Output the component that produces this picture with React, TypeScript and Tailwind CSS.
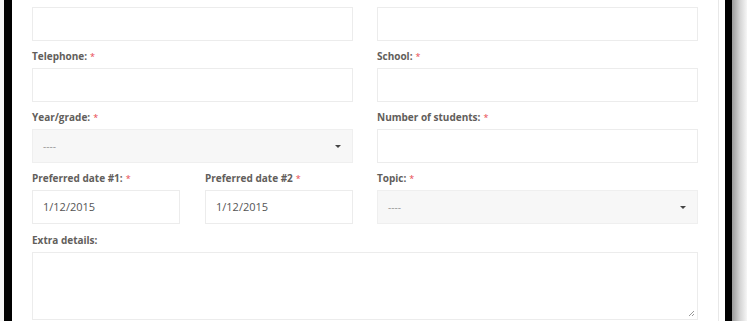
const font = { fontFamily: '"Open Sans", "Noto Sans", sans-serif' };

function Label({ text, req = true }: { text: string; req?: boolean }) {
  return (
    <div className="h-[13px] mb-[5px] mt-[1px] text-[10px] leading-[13px] font-bold text-[#625e5b] whitespace-nowrap">
      {text}
      {req && <span className="ml-[3px] text-[#e8474f] text-[9px] font-normal">*</span>}
    </div>
  );
}

function Input({ value = "" }: { value?: string }) {
  return (
    <div className="h-[34px] border border-[#ececec] bg-white px-[10px] flex items-center text-[11px] text-[#555]">
      {value}
    </div>
  );
}

function Select() {
  return (
    <div className="h-[34px] border border-[#efefef] bg-[#f7f7f7] pl-[10px] pr-[10px] flex items-center justify-between text-[10px] text-[#9a9a9a]">
      <span>----</span>
      <span className="w-0 h-0 border-l-[3px] border-r-[3px] border-t-[3px] border-l-transparent border-r-transparent border-t-[#444] mr-[1px]" />
    </div>
  );
}

export default function App() {
  return (
    <div className="w-[747px] h-[321px] overflow-hidden flex bg-white" style={font}>
      <div className="w-[4px] bg-[#f4f4f4]" />
      <div className="w-[8px] bg-black" />
      <div className="w-[707px] border-r border-[#e8e8e8] pl-[20px] pt-[7px]">
        <div className="grid grid-cols-[321px_321px] gap-x-[24px] gap-y-[8px]">
          <Input />
          <Input />
          <div>
            <Label text="Telephone:" />
            <Input />
          </div>
          <div>
            <Label text="School:" />
            <Input />
          </div>
          <div>
            <Label text="Year/grade:" />
            <Select />
          </div>
          <div>
            <Label text="Number of students:" />
            <Input />
          </div>
          <div className="grid grid-cols-[148px_148px] gap-x-[25px]">
            <div>
              <Label text="Preferred date #1:" />
              <Input value="1/12/2015" />
            </div>
            <div>
              <Label text="Preferred date #2" />
              <Input value="1/12/2015" />
            </div>
          </div>
          <div>
            <Label text="Topic:" />
            <Select />
          </div>
          <div className="col-span-2 pt-[1px]">
            <Label text="Extra details:" req={false} />
            <div className="relative h-[68px] border border-[#ececec] bg-white">
              <svg className="absolute right-[2px] bottom-[2px]" width="7" height="7" viewBox="0 0 7 7">
                <path d="M6 1 L1 6 M6 4 L4 6" stroke="#999" strokeWidth="1" />
              </svg>
            </div>
          </div>
        </div>
      </div>
      <div className="w-[6px] bg-white" />
      <div className="w-[7px] bg-black" />
      <div className="flex-1 bg-gradient-to-r from-[#9a9a9a] via-[#d2d2d2] to-[#f6f6f6]" />
    </div>
  );
}
